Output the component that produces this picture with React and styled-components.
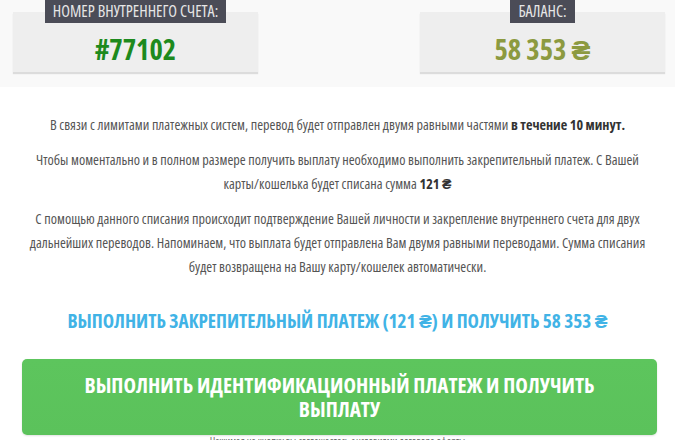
import React from 'react';
import styled, { createGlobalStyle } from 'styled-components';

const Global = createGlobalStyle`
  body {
    margin: 0;
    background: #fff;
    font-family: "Open Sans", "Liberation Sans", sans-serif;
    font-stretch: 75%;
  }
`;

const Band = styled.div`
  background: #f9f9f9;
  height: 87px;
  padding: 12px 10px 0 13px;
  box-sizing: border-box;
  display: flex;
  justify-content: space-between;
  align-items: flex-start;
`;

const Card = styled.div`
  width: 245px;
  height: 60px;
  background: #eeeeee;
  box-shadow: 0 2px 1px #dcdcdc;
  display: flex;
  flex-direction: column;
  align-items: center;
`;

const Label = styled.div`
  margin-top: -12px;
  height: 23px;
  padding: 0 8px;
  background: #4b4c57;
  color: #e6e6e6;
  font-size: 16px;
  line-height: 23px;
  white-space: nowrap;
`;

const Amount = styled.div`
  flex: 1;
  display: flex;
  align-items: center;
  padding-top: 2px;
  font-size: 28.5px;
  font-weight: bold;
  color: ${p => p.$color};
`;

const Content = styled.div`
  padding: 26px 18px 0;
  text-align: center;
`;

const Para = styled.p`
  margin: 0 0 11px;
  font-size: 14.2px;
  line-height: 24px;
  color: #555;

  b {
    color: #333;
  }
`;

const Heading = styled.div`
  margin-top: 29px;
  font-size: 19.2px;
  font-weight: bold;
  color: #41b3e6;
  line-height: 26px;
`;

const Button = styled.div`
  margin: 25px 0 0 4px;
  height: 76px;
  border-radius: 5px;
  background: linear-gradient(180deg, #5dc55d, #5bc25b);
  box-shadow: 0 1px 2px rgba(0, 0, 0, 0.12);
  color: #fff;
  font-size: 21.2px;
  font-weight: bold;
  line-height: 24px;
  display: flex;
  align-items: center;
  justify-content: center;
  padding: 0 40px;
  box-sizing: border-box;
`;

const Note = styled.div`
  font-size: 10.5px;
  color: #666;
  line-height: 12px;
`;

export default function App() {
  return (
    <>
      <Global />
      <Band>
        <Card>
          <Label>НОМЕР ВНУТРЕННЕГО СЧЕТА:</Label>
          <Amount $color="#1d8a1d">#77102</Amount>
        </Card>
        <Card>
          <Label>БАЛАНС:</Label>
          <Amount $color="#8c9a40">58 353 ₴</Amount>
        </Card>
      </Band>
      <Content>
        <Para>
          В связи с лимитами платежных систем, перевод будет отправлен двумя равными частями <b>в течение 10 минут.</b>
        </Para>
        <Para>
          Чтобы моментально и в полном размере получить выплату необходимо выполнить закрепительный платеж. С Вашей карты/кошелька будет списана сумма <b>121 ₴</b>
        </Para>
        <Para>
          С помощью данного списания происходит подтверждение Вашей личности и закрепление внутреннего счета для двух дальнейших переводов. Напоминаем, что выплата будет отправлена Вам двумя равными переводами. Сумма списания будет возвращена на Вашу карту/кошелек автоматически.
        </Para>
        <Heading>ВЫПОЛНИТЬ ЗАКРЕПИТЕЛЬНЫЙ ПЛАТЕЖ (121 ₴) И ПОЛУЧИТЬ 58 353 ₴</Heading>
        <Button>ВЫПОЛНИТЬ ИДЕНТИФИКАЦИОННЫЙ ПЛАТЕЖ И ПОЛУЧИТЬ ВЫПЛАТУ</Button>
        <Note>Нажимая на кнопку вы соглашаетесь с условиями договора оферты</Note>
      </Content>
    </>
  );
}
